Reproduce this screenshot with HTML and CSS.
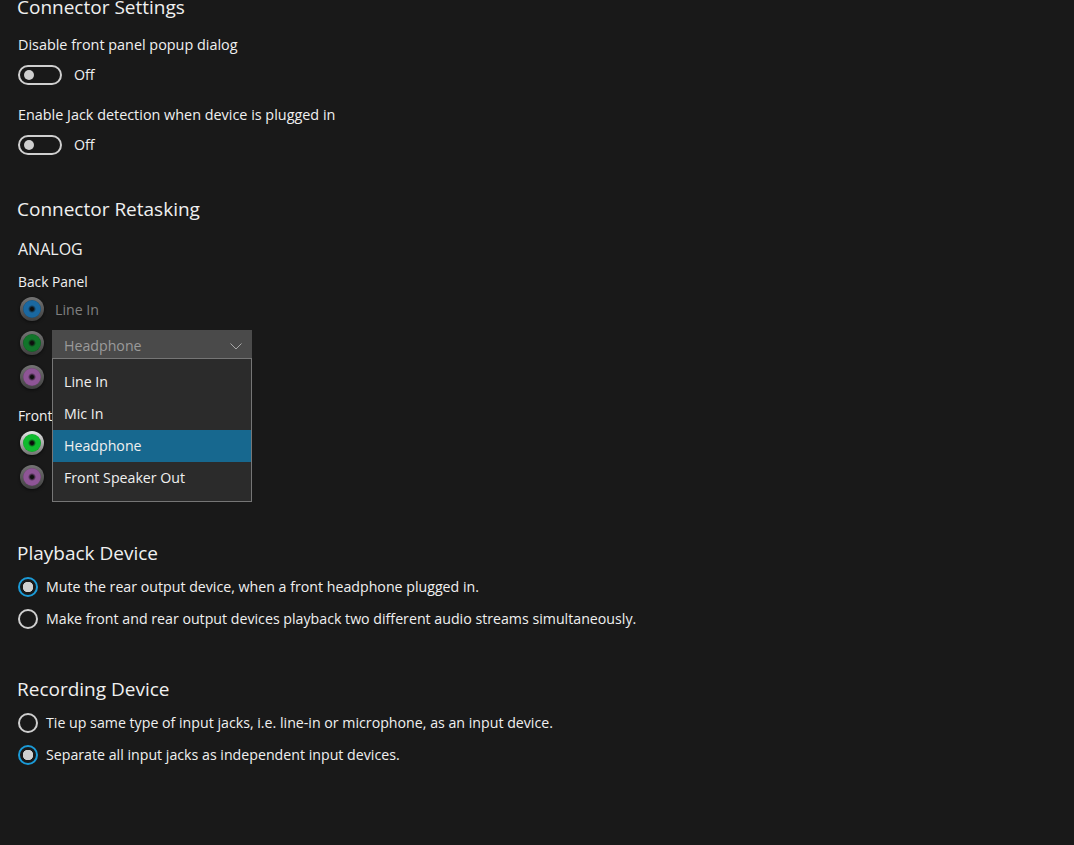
FILE: index.html
```html
<!DOCTYPE html>
<html lang="en">
<head>
<meta charset="utf-8">
<title>Connector Settings</title>
<link rel="stylesheet" href="styles.css">
</head>
<body>
<main class="page">
  <section class="settings">
    <h2 class="heading">Connector Settings</h2>
    <div class="field">
      <p class="label">Disable front panel popup dialog</p>
      <div class="toggle-row"><span class="toggle"><span class="knob"></span></span><span class="state">Off</span></div>
    </div>
    <div class="field">
      <p class="label">Enable Jack detection when device is plugged in</p>
      <div class="toggle-row"><span class="toggle"><span class="knob"></span></span><span class="state">Off</span></div>
    </div>
  </section>

  <section class="retasking">
    <h2 class="heading">Connector Retasking</h2>
    <h3 class="sub">ANALOG</h3>
    <p class="panel-label">Back Panel</p>
    <div class="jack-row"><span class="jack jack-blue dim"></span><span class="jack-text">Line In</span></div>
    <div class="jack-row"><span class="jack jack-green dim"></span>
      <div class="combo-wrap">
        <div class="combo"><span>Headphone</span>
          <svg class="chevron" width="12" height="7" viewBox="0 0 12 7"><path d="M0.5 0.5l5.5 5.5 5.5-5.5" fill="none" stroke="#a8a8a8" stroke-width="1"/></svg>
        </div>
        <ul class="menu">
          <li class="menu-item">Line In</li>
          <li class="menu-item">Mic In</li>
          <li class="menu-item selected">Headphone</li>
          <li class="menu-item">Front Speaker Out</li>
        </ul>
      </div>
    </div>
    <div class="jack-row"><span class="jack jack-purple dim"></span></div>
    <p class="panel-label front">Front Panel</p>
    <div class="jack-row"><span class="jack jack-bright"></span></div>
    <div class="jack-row"><span class="jack jack-purple dim"></span></div>
  </section>

  <section class="choice">
    <h2 class="heading">Playback Device</h2>
    <div class="radio-row"><span class="radio on"></span><span>Mute the rear output device, when a front headphone plugged in.</span></div>
    <div class="radio-row"><span class="radio"></span><span>Make front and rear output devices playback two different audio streams simultaneously.</span></div>
  </section>

  <section class="choice recording">
    <h2 class="heading">Recording Device</h2>
    <div class="radio-row"><span class="radio"></span><span>Tie up same type of input jacks, i.e. line-in or microphone, as an input device.</span></div>
    <div class="radio-row"><span class="radio on"></span><span>Separate all input jacks as independent input devices.</span></div>
  </section>
</main>
</body>
</html>
```
FILE: styles.css
```css
* { box-sizing: border-box; }
html, body { margin: 0; height: 100%; overflow: hidden; background: #191919; }
body { color: #f0f0f0; font-family: "Open Sans", "Noto Sans", sans-serif; font-size: 14.2px; line-height: 20px; }
.page { padding: 0 18px; margin-top: -6px; display: flex; flex-direction: column; }
.heading { margin: 0 0 0 -1px; font-size: 19px; line-height: 26px; font-weight: 400; }
.label { margin: 0; font-size: 14.4px; }
.settings .heading { margin-bottom: 15px; }
.field { margin-bottom: 20px; }
.toggle-row { display: flex; align-items: center; gap: 12px; height: 20px; margin-top: 10px; }
.toggle { width: 44px; height: 20px; border: 2px solid #cfcfcf; border-radius: 10px; display: flex; align-items: center; padding-left: 4px; }
.knob { width: 10px; height: 10px; border-radius: 50%; background: #cfcfcf; }
.retasking { margin-top: 21px; }
.sub { margin: 16px 0 0; font-size: 16px; line-height: 22px; font-weight: 400; }
.panel-label { margin: 12px 0 0; font-size: 13.8px; }
.panel-label.front { margin: 12px 0 0; }
.jack-row { display: flex; align-items: center; gap: 8px; height: 34px; margin-left: 2px; }
.jack { position: relative; width: 24px; height: 24px; border-radius: 50%; flex: none; background: linear-gradient(#8e8e8e, #4c4c4c); box-shadow: 0 1px 3px rgba(0,0,0,.7); }
.jack::before { content: ""; position: absolute; inset: 3px; border-radius: 50%; background: radial-gradient(circle, #0c0c0c 0, #0c0c0c 1.5px, var(--c) 4px, var(--c) 8px, var(--e) 9px); }
.jack.dim { opacity: .78; }
.jack-blue { --c: #1b7fc8; --e: #155f96; }
.jack-green { --c: #0f8f30; --e: #0b6a22; }
.jack-purple { --c: #b067ba; --e: #8b5092; }
.jack-bright { --c: #0fbb2e; --e: #0c9a26; background: linear-gradient(#e6e6e6, #707070); }
.jack-text { color: #808080; margin-left: 3px; padding-top: 2px; }
.combo-wrap { position: relative; width: 200px; margin-top: 2px; }
.combo { height: 28px; background: #4a4a4a; color: #9a9a9a; display: flex; align-items: center; justify-content: space-between; padding: 4px 10px 0 12px; }
.menu { position: absolute; top: 28px; left: 0; width: 200px; height: 144px; margin: 0; padding: 7px 0; list-style: none; background: #2b2b2b; border: 1px solid #767676; }
.menu-item { height: 32px; padding-left: 11px; display: flex; align-items: center; }
.menu-item.selected { background: #17688f; }
.choice { margin-top: 46px; }
.choice .heading { margin-bottom: 5px; }
.recording { margin-top: 41px; }
.radio-row { display: flex; align-items: center; gap: 8px; height: 32px; }
.radio { width: 20px; height: 20px; border-radius: 50%; border: 2px solid #cfcfcf; flex: none; }
.radio.on { border-color: #1b9ad6; background: radial-gradient(circle, #d0d0d0 0 5px, transparent 5.5px); }
```
